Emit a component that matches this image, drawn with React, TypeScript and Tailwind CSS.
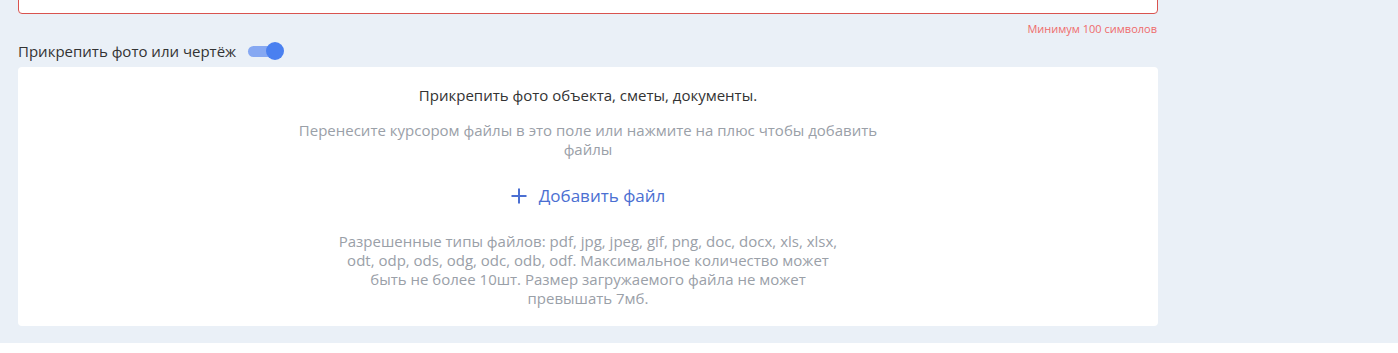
export default function App() {
  return (
    <div
      className="min-h-[353px] bg-[#eaf0f7] text-[#333]"
      style={{ fontFamily: '"Open Sans", "Noto Sans", sans-serif' }}
    >
      <div className="w-[1140px] ml-[18px]">
        {/* textarea bottom edge */}
        <div className="-mt-[10px] h-[24px] rounded-[4px] border border-[#d9534f] bg-white" />
        <div className="mt-[8px] text-right text-[11px] leading-[14px] text-[#ef6b6b] pr-[1px]">
          Минимум 100 символов
        </div>

        <div className="mt-[5px] flex items-center gap-[12px]">
          <span className="text-[15px] leading-[20px] text-[#333]">Прикрепить фото или чертёж</span>
          <div className="relative h-[18px] w-[36px]">
            <div className="absolute left-0 top-[4px] h-[11px] w-[34px] rounded-full bg-[#86a8f2]" />
            <div className="absolute right-0 top-0 h-[18px] w-[18px] rounded-full bg-[#4a80f0]" />
          </div>
        </div>

        <div className="mt-[6px] flex h-[259px] flex-col items-center rounded-[4px] bg-white pt-[18px] text-center">
          <div className="text-[15px] leading-[20px] text-[#333]">
            Прикрепить фото объекта, сметы, документы.
          </div>
          <div className="mt-[16px] w-[600px] text-[15px] leading-[19px] text-[#9aa0a8]">
            Перенесите курсором файлы в это поле или нажмите на плюс чтобы добавить файлы
          </div>
          <button className="mt-[26px] flex items-center gap-[12px] text-[17px] leading-[22px] text-[#4b6fd2]">
            <svg width="16" height="16" viewBox="0 0 16 16" fill="none">
              <path d="M8 0.5V15.5M0.5 8H15.5" stroke="#4b6fd2" strokeWidth="2" />
            </svg>
            Добавить файл
          </button>
          <div className="mt-[25px] w-[515px] text-[15px] leading-[19px] text-[#9aa0a8]">
            Разрешенные типы файлов: pdf, jpg, jpeg, gif, png, doc, docx, xls, xlsx, odt, odp, ods, odg, odc, odb, odf. Максимальное количество может быть не более 10шт. Размер загружаемого файла не может превышать 7мб.
          </div>
        </div>
      </div>
    </div>
  );
}
